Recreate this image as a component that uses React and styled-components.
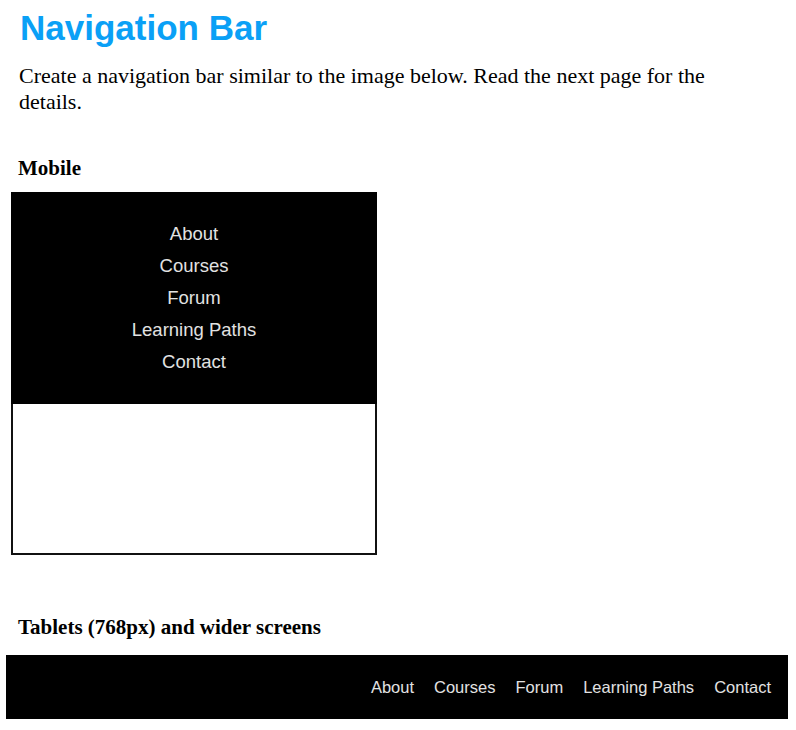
import React from "react";
import styled, { createGlobalStyle } from "styled-components";

const GlobalStyle = createGlobalStyle`
  html, body {
    margin: 0;
    padding: 0;
    background: #fff;
  }
  body {
    font-family: "Liberation Serif", serif;
    color: #000;
  }
`;

const links = ["About", "Courses", "Forum", "Learning Paths", "Contact"];

function App() {
  return (
    <>
      <GlobalStyle />
      <Page>
        <Title>Navigation Bar</Title>
        <Intro>
          Create a navigation bar similar to the image below. Read the next page for the details.
        </Intro>
        <Section>
          <Label>Mobile</Label>
          <MobileFrame>
            <MobileNav>
              {links.map((l) => (
                <MobileLink key={l}>{l}</MobileLink>
              ))}
            </MobileNav>
            <MobileBody />
          </MobileFrame>
        </Section>
        <Section $tablet>
          <Label>Tablets (768px) and wider screens</Label>
          <DesktopNav>
            {links.map((l) => (
              <DesktopLink key={l}>{l}</DesktopLink>
            ))}
          </DesktopNav>
        </Section>
      </Page>
    </>
  );
}

const Page = styled.div`
  width: 796px;
  height: 730px;
  overflow: hidden;
  display: flex;
  flex-direction: column;
`;

const Title = styled.h1`
  font-family: "Liberation Sans", Arial, sans-serif;
  font-weight: bold;
  font-size: 35px;
  line-height: 40px;
  color: #0aa0f6;
  margin: 8px 0 0 20px;
`;

const Intro = styled.p`
  font-family: "Liberation Serif", serif;
  font-size: 22px;
  line-height: 26px;
  margin: 15px 0 0 19px;
  width: 700px;
`;

const Section = styled.div`
  display: flex;
  flex-direction: column;
  margin-top: ${(p) => (p.$tablet ? "60px" : "41px")};
`;

const Label = styled.h3`
  font-family: "Liberation Serif", serif;
  font-weight: bold;
  font-size: 21px;
  line-height: 24px;
  margin: 0 0 0 18px;
`;

const MobileFrame = styled.div`
  margin: 12px 0 0 11px;
  width: 366px;
  display: flex;
  flex-direction: column;
`;

const MobileNav = styled.nav`
  background: #000;
  height: 212px;
  display: flex;
  flex-direction: column;
  align-items: center;
  padding-top: 26px;
  box-sizing: border-box;
`;

const MobileLink = styled.a`
  font-family: "Liberation Sans", Arial, sans-serif;
  font-size: 18.5px;
  line-height: 32px;
  color: #e2e2e2;
`;

const MobileBody = styled.div`
  height: 151px;
  border: 2px solid #111;
  border-top: none;
  box-sizing: border-box;
  background: #fff;
`;

const DesktopNav = styled.nav`
  margin: 16px 8px 0 6px;
  height: 64px;
  background: #000;
  display: flex;
  justify-content: flex-end;
  align-items: center;
  gap: 20px;
  padding-right: 17px;
`;

const DesktopLink = styled.a`
  font-family: "Liberation Sans", Arial, sans-serif;
  font-size: 16.5px;
  color: #e2e2e2;
`;

export default App;
